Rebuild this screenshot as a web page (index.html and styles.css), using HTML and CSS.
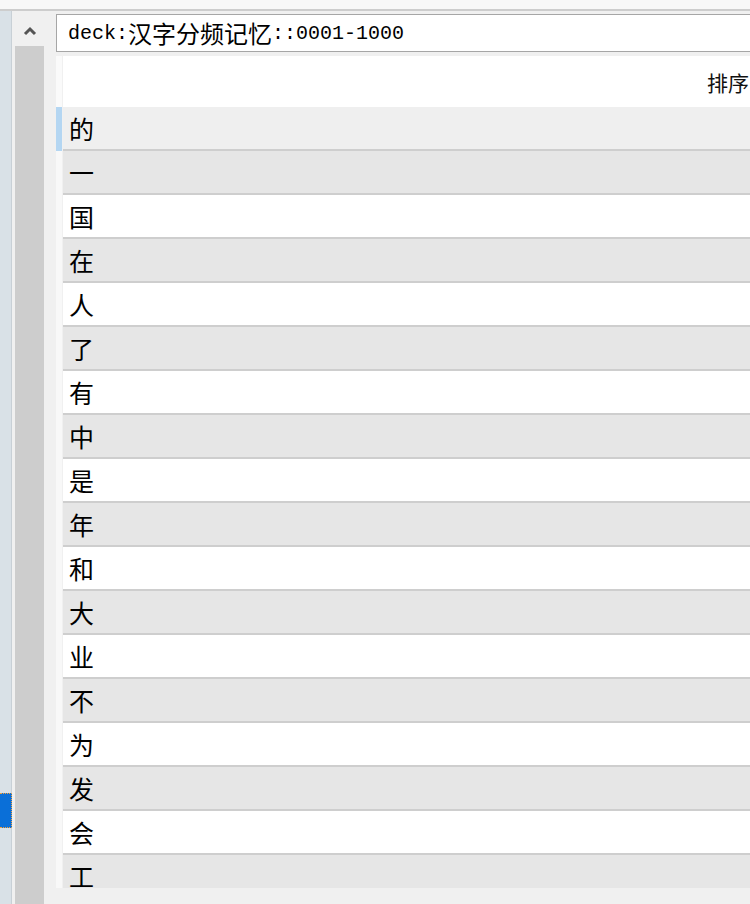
FILE: index.html
```html
<!DOCTYPE html>
<html lang="zh-CN">
<head>
    <meta charset="UTF-8">
    <meta name="viewport" content="width=device-width, initial-scale=1.0">
    <title>汉字分频记忆</title>
    <link rel="stylesheet" href="styles.css">
</head>
<body>
    <div class="topbar"></div>

    <div class="main">
        <!-- left dock strip -->
        <aside class="side">
            <div class="side-marker"></div>
        </aside>

        <!-- vertical scrollbar -->
        <div class="scrollbar">
            <div class="scroll-up">
                <svg width="14" height="10" viewBox="0 0 14 10">
                    <polyline points="2,8 7,3 12,8" fill="none" stroke="#555" stroke-width="3"/>
                </svg>
            </div>
            <div class="scroll-thumb"></div>
        </div>

        <section class="panel">
            <div class="search">
                <span>deck:</span><span class="cjk">汉字分频记忆</span><span>::0001-1000</span>
            </div>

            <div class="grid">
                <div class="row head">
                    <div class="mark"></div>
                    <div class="body">
                        <div class="cell-word"></div>
                        <div class="cell-sort">排序</div>
                    </div>
                </div>
                <div class="row current"><div class="mark"></div><div class="body"><div class="cell-word">的</div></div></div>
                <div class="row alt"><div class="mark"></div><div class="body"><div class="cell-word">一</div></div></div>
                <div class="row"><div class="mark"></div><div class="body"><div class="cell-word">国</div></div></div>
                <div class="row alt"><div class="mark"></div><div class="body"><div class="cell-word">在</div></div></div>
                <div class="row"><div class="mark"></div><div class="body"><div class="cell-word">人</div></div></div>
                <div class="row alt"><div class="mark"></div><div class="body"><div class="cell-word">了</div></div></div>
                <div class="row"><div class="mark"></div><div class="body"><div class="cell-word">有</div></div></div>
                <div class="row alt"><div class="mark"></div><div class="body"><div class="cell-word">中</div></div></div>
                <div class="row"><div class="mark"></div><div class="body"><div class="cell-word">是</div></div></div>
                <div class="row alt"><div class="mark"></div><div class="body"><div class="cell-word">年</div></div></div>
                <div class="row"><div class="mark"></div><div class="body"><div class="cell-word">和</div></div></div>
                <div class="row alt"><div class="mark"></div><div class="body"><div class="cell-word">大</div></div></div>
                <div class="row"><div class="mark"></div><div class="body"><div class="cell-word">业</div></div></div>
                <div class="row alt"><div class="mark"></div><div class="body"><div class="cell-word">不</div></div></div>
                <div class="row"><div class="mark"></div><div class="body"><div class="cell-word">为</div></div></div>
                <div class="row alt"><div class="mark"></div><div class="body"><div class="cell-word">发</div></div></div>
                <div class="row"><div class="mark"></div><div class="body"><div class="cell-word">会</div></div></div>
                <div class="row alt"><div class="mark"></div><div class="body"><div class="cell-word">工</div></div></div>
            </div>
        </section>
    </div>
</body>
</html>
```

FILE: styles.css
```css
html, body {
    margin: 0;
    padding: 0;
    height: 904px;
    overflow: hidden;
}

body {
    font-family: "Noto Sans CJK SC", "Noto Sans", sans-serif;
    background-color: #f0f0f0;
    color: #000;
}

.topbar {
    height: 9px;
    background-color: #f8f8f8;
    border-bottom: 2px solid #cdcdcd;
}

.main {
    display: flex;
    height: 893px;
}

/* left dock strip */
.side {
    width: 12px;
    flex-shrink: 0;
    background-color: #d9e1e7;
    border-right: 1px solid #c8d0d6;
    margin-right: 3px;
    display: flex;
    flex-direction: column;
    justify-content: flex-end;
    padding-bottom: 76px;
    box-sizing: border-box;
}

.side-marker {
    height: 35px;
    margin-right: -1px;
    background-color: #0a6fd8;
    border: 1px dotted #f0a040;
    border-left: none;
    box-sizing: border-box;
}

/* scrollbar */
.scrollbar {
    width: 29px;
    flex-shrink: 0;
    margin-right: 12px;
    display: flex;
    flex-direction: column;
}

.scroll-up {
    height: 35px;
    display: flex;
    align-items: center;
    justify-content: center;
    padding-top: 4px;
    box-sizing: border-box;
}

.scroll-thumb {
    flex: 1;
    background-color: #cdcdcd;
}

/* main panel */
.panel {
    width: 720px;
    flex-shrink: 0;
    padding-top: 3px;
}

.search {
    height: 38px;
    box-sizing: border-box;
    border: 1px solid #a6a6a6;
    background-color: #fff;
    padding-left: 11px;
    display: flex;
    align-items: center;
    font-family: "Liberation Mono", "Noto Sans CJK SC", monospace;
    font-size: 20px;
    white-space: nowrap;
}

.search .cjk {
    font-family: "Noto Sans CJK SC", sans-serif;
    font-size: 24px;
    line-height: 1;
}

.grid {
    margin-top: 4px;
    height: 832px;
    overflow: hidden;
}

.row {
    display: flex;
    height: 44px;
}

.row .mark {
    width: 6px;
    flex-shrink: 0;
    background-color: #f8f8f8;
    border-right: 1px solid #f0f0f0;
}

.row .body {
    flex: 1;
    display: flex;
    align-items: center;
    background-color: #fff;
    border-bottom: 2px solid #cecece;
    box-sizing: border-box;
}

.row.alt .body {
    background-color: #e6e6e6;
}

.row.current .body {
    background-color: #efefef;
}

.row.current .mark {
    background-color: #b4d6f2;
}

.cell-word {
    width: 644px;
    flex-shrink: 0;
    padding-left: 6px;
    box-sizing: border-box;
    font-size: 25px;
    line-height: 42px;
}

.row.head {
    height: 51px;
}

.row.head .mark {
    background-color: #fafafa;
}

.row.head .body {
    border-bottom: none;
}

.cell-sort {
    font-size: 21px;
    color: #111;
    white-space: nowrap;
}
```
